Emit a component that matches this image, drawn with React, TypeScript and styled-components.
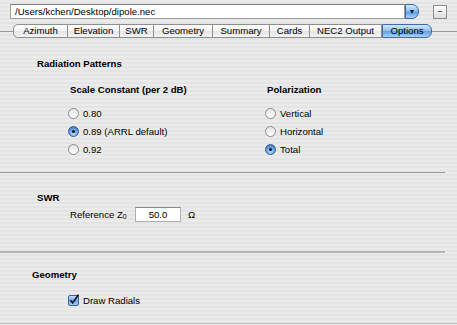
import React from "react";
import styled, { createGlobalStyle } from "styled-components";

const GlobalStyle = createGlobalStyle`
  html, body { margin: 0; padding: 0; }
  body { background: #e8e8e8; }
`;

const Window = styled.div`
  width: 457px;
  height: 325px;
  overflow: hidden;
  display: flex;
  flex-direction: column;
  background: repeating-linear-gradient(
    to bottom,
    #ebebeb 0,
    #ebebeb 2px,
    #e4e4e4 2px,
    #e4e4e4 4px
  );
  font-family: "Liberation Sans", Arial, sans-serif;
  font-size: 9.6px;
  color: #000;
`;

const TopBar = styled.div`
  display: flex;
  align-items: center;
  padding: 4px 0 0 10px;
  height: 15px;
`;

const Combo = styled.div`
  display: flex;
  width: 409px;
  height: 15px;
`;

const ComboField = styled.div`
  flex: 1;
  box-sizing: border-box;
  height: 15px;
  background: #fff;
  border: 1px solid #a0a0a0;
  border-top-color: #7c7c7c;
  padding-left: 4px;
  line-height: 13px;
`;

const ComboButton = styled.div`
  width: 14px;
  height: 15px;
  box-sizing: border-box;
  border: 1px solid #3d669e;
  border-radius: 0 7px 7px 0;
  background: linear-gradient(to bottom, #d6eafc 0%, #8ec0f0 45%, #5f9fe4 55%, #a6d2f8 100%);
  display: flex;
  align-items: center;
  justify-content: center;

  &::after {
    content: "";
    border-left: 2.5px solid transparent;
    border-right: 2.5px solid transparent;
    border-top: 4px solid #1a1a1a;
    margin-left: -1px;
  }
`;

const MiniButton = styled.div`
  margin-left: 14px;
  width: 14px;
  height: 14px;
  box-sizing: border-box;
  border: 1px solid #8c8c8c;
  background: linear-gradient(to bottom, #ffffff, #dddddd);
  display: flex;
  align-items: center;
  justify-content: center;
`;

const Dash = styled.span`
  width: 4px;
  height: 1px;
  background: #555;
`;

const TabRow = styled.div`
  display: flex;
  align-items: center;
  margin-top: 5px;
  height: 14px;
`;

const TabLine = styled.div<{ $grow?: boolean }>`
  height: 1px;
  background: #9a9a9a;
  width: 13px;
  flex: ${(p) => (p.$grow ? 1 : "none")};
`;

const Tabs = styled.div`
  display: flex;
`;

const Tab = styled.div<{ $w: number; $active?: boolean; $first?: boolean; $last?: boolean }>`
  width: ${(p) => p.$w}px;
  height: 14px;
  box-sizing: border-box;
  border: 1px solid ${(p) => (p.$active ? "#3f6ca6" : "#8e8e8e")};
  border-left-width: ${(p) => (p.$first || p.$active ? 1 : 0)}px;
  border-radius: ${(p) => (p.$first ? "5px 0 0 5px" : p.$last ? "0 6px 6px 0" : "0")};
  background: ${(p) =>
    p.$active
      ? "linear-gradient(to bottom, #d3e8fc 0%, #93c3f1 45%, #639fe2 55%, #a9d3f9 100%)"
      : "linear-gradient(to bottom, #ffffff 0%, #f3f3f3 45%, #e6e6e6 55%, #f4f4f4 100%)"};
  text-align: center;
  line-height: 12px;
  white-space: nowrap;
`;

const Section = styled.div<{ $pt: number; $pb: number; $pl: number; $grow?: boolean }>`
  padding: ${(p) => `${p.$pt}px 0 ${p.$pb}px ${p.$pl}px`};
  flex: ${(p) => (p.$grow ? 1 : "none")};
`;

const Heading = styled.div`
  font-weight: bold;
  line-height: 12px;
  white-space: nowrap;
`;

const Columns = styled.div`
  display: flex;
  margin: 14px 0 0 31px;
`;

const Column = styled.div<{ $w?: number }>`
  width: ${(p) => (p.$w ? `${p.$w}px` : "auto")};
`;

const ColumnHeading = styled(Heading)`
  padding-left: 2px;
  margin-bottom: 8px;
`;

const OptionRow = styled.div`
  display: flex;
  align-items: center;
  gap: 4px;
  height: 18px;
  white-space: nowrap;
`;

const RadioDot = styled.span<{ $on?: boolean }>`
  width: 11px;
  height: 11px;
  box-sizing: border-box;
  border-radius: 50%;
  border: 1px solid ${(p) => (p.$on ? "#355c92" : "#8a8a8a")};
  background: ${(p) =>
    p.$on
      ? "radial-gradient(circle at 50% 75%, #b6dcfb 0%, #5d9de3 55%, #2f68b3 100%)"
      : "linear-gradient(to bottom, #e4e4e4, #ffffff)"};
  display: flex;
  align-items: center;
  justify-content: center;

  &::after {
    content: "";
    display: ${(p) => (p.$on ? "block" : "none")};
    width: 3px;
    height: 3px;
    border-radius: 50%;
    background: #111;
  }
`;

const Separator = styled.div<{ $h: number; $c: string }>`
  width: 445px;
  height: ${(p) => p.$h}px;
  background: ${(p) => p.$c};
`;

const FieldRow = styled.div`
  display: flex;
  align-items: center;
  margin: 3px 0 0 33px;
  height: 15px;
`;

const FieldLabel = styled.span`
  width: 65px;
  white-space: nowrap;
`;

const Sub = styled.sub`
  font-size: 7px;
  vertical-align: -1px;
`;

const NumberBox = styled.div`
  width: 46px;
  height: 15px;
  box-sizing: border-box;
  background: #fff;
  border: 1px solid #b0b0b0;
  border-top-color: #8a8a8a;
  text-align: center;
  line-height: 13px;
`;

const Unit = styled.span`
  margin-left: 7px;
`;

const CheckRow = styled(OptionRow)`
  margin: 11px 0 0 36px;
  height: 16px;
  gap: 3px;
`;

const BottomLine = styled.div`
  height: 1px;
  background: #c2c2c2;
  margin-bottom: 1px;
`;

const tabs = [
  { label: "Azimuth", w: 55 },
  { label: "Elevation", w: 52 },
  { label: "SWR", w: 34 },
  { label: "Geometry", w: 59 },
  { label: "Summary", w: 57 },
  { label: "Cards", w: 40 },
  { label: "NEC2 Output", w: 72 },
  { label: "Options", w: 50 },
];

const Radio: React.FC<{ on?: boolean; label: string }> = ({ on, label }) => (
  <OptionRow>
    <RadioDot $on={on} />
    <span>{label}</span>
  </OptionRow>
);

const CheckBox = () => (
  <svg width="12" height="12" viewBox="0 0 12 12">
    <defs>
      <linearGradient id="cb" x1="0" y1="0" x2="0" y2="1">
        <stop offset="0" stopColor="#cfe5fb" />
        <stop offset="0.5" stopColor="#6fa9e8" />
        <stop offset="1" stopColor="#a7d1f8" />
      </linearGradient>
    </defs>
    <rect x="0.5" y="1.5" width="10" height="10" rx="1.5" fill="url(#cb)" stroke="#3a6198" />
    <path d="M2.5 6.2 L4.6 9 L10.5 0.8" fill="none" stroke="#111" strokeWidth="1.6" />
  </svg>
);

export default function App() {
  return (
    <Window>
      <GlobalStyle />
      <TopBar>
        <Combo>
          <ComboField>/Users/kchen/Desktop/dipole.nec</ComboField>
          <ComboButton />
        </Combo>
        <MiniButton>
          <Dash />
        </MiniButton>
      </TopBar>

      <TabRow>
        <TabLine />
        <Tabs>
          {tabs.map((t, i) => (
            <Tab
              key={t.label}
              $w={t.w}
              $first={i === 0}
              $last={i === tabs.length - 1}
              $active={t.label === "Options"}
            >
              {t.label}
            </Tab>
          ))}
        </Tabs>
        <TabLine $grow />
      </TabRow>

      <Section $pt={20} $pb={14} $pl={37}>
        <Heading>Radiation Patterns</Heading>
        <Columns>
          <Column $w={197}>
            <ColumnHeading>Scale Constant (per 2 dB)</ColumnHeading>
            <Radio label="0.80" />
            <Radio on label="0.89 (ARRL default)" />
            <Radio label="0.92" />
          </Column>
          <Column>
            <ColumnHeading>Polarization</ColumnHeading>
            <Radio label="Vertical" />
            <Radio label="Horizontal" />
            <Radio on label="Total" />
          </Column>
        </Columns>
      </Section>

      <Separator $h={1} $c="#969696" />

      <Section $pt={19} $pb={29} $pl={37}>
        <Heading>SWR</Heading>
        <FieldRow>
          <FieldLabel>
            Reference Z<Sub>0</Sub>
          </FieldLabel>
          <NumberBox>50.0</NumberBox>
          <Unit>Ω</Unit>
        </FieldRow>
      </Section>

      <Separator $h={2} $c="#b4b4b4" />

      <Section $pt={16} $pb={0} $pl={32} $grow>
        <Heading>Geometry</Heading>
        <CheckRow>
          <CheckBox />
          <span>Draw Radials</span>
        </CheckRow>
      </Section>

      <BottomLine />
    </Window>
  );
}
